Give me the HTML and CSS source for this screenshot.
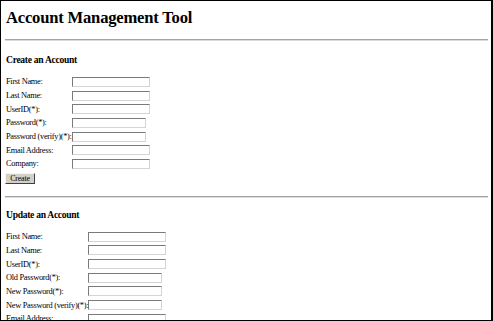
FILE: index.html
```html
<!DOCTYPE html>
<html lang="en">
<head>
    <meta charset="UTF-8">
    <title>Account Management Tool</title>
    <link rel="stylesheet" href="styles.css">
</head>
<body>
    <div class="frame">
        <h1 class="page-title">Account Management Tool</h1>
        <hr class="divider">

        <!-- Create form -->
        <h3 class="section-title">Create an Account</h3>
        <table class="form-table create-table">
            <tr><td class="label">First Name:</td><td><input class="field" type="text"></td></tr>
            <tr><td class="label">Last Name:</td><td><input class="field" type="text"></td></tr>
            <tr><td class="label">UserID(*):</td><td><input class="field" type="text"></td></tr>
            <tr><td class="label">Password(*):</td><td><input class="field field-pass" type="password"></td></tr>
            <tr><td class="label">Password (verify)(*):</td><td><input class="field field-pass" type="password"></td></tr>
            <tr><td class="label">Email Address:</td><td><input class="field" type="text"></td></tr>
            <tr><td class="label">Company:</td><td><input class="field" type="text"></td></tr>
        </table>
        <button class="btn" type="button">Create</button>

        <hr class="divider divider-second">

        <!-- Update form -->
        <h3 class="section-title update-title">Update an Account</h3>
        <table class="form-table update-table">
            <tr><td class="label">First Name:</td><td><input class="field" type="text"></td></tr>
            <tr><td class="label">Last Name:</td><td><input class="field" type="text"></td></tr>
            <tr><td class="label">UserID(*):</td><td><input class="field" type="text"></td></tr>
            <tr><td class="label">Old Password(*):</td><td><input class="field field-pass" type="password"></td></tr>
            <tr><td class="label">New Password(*):</td><td><input class="field field-pass" type="password"></td></tr>
            <tr><td class="label">New Password (verify)(*):</td><td><input class="field field-pass" type="password"></td></tr>
            <tr><td class="label">Email Address:</td><td><input class="field" type="text"></td></tr>
            <tr><td class="label">Company:</td><td><input class="field" type="text"></td></tr>
        </table>
    </div>
</body>
</html>
```

FILE: styles.css
```css
html, body {
    margin: 0;
    padding: 0;
}

.frame {
    box-sizing: border-box;
    width: 493px;
    height: 321px;
    border: 1px solid #000;
    border-right-width: 2px;
    overflow: hidden;
    padding: 0 3px 0 4px;
    font-family: "Liberation Serif", "Times New Roman", serif;
    color: #000;
    background: #fff;
}

.page-title {
    font-size: 16.6px;
    line-height: 20px;
    font-weight: bold;
    letter-spacing: -0.2px;
    margin: 7px 0 0 1px;
}

.divider {
    height: 0;
    margin: 11px 0 0 0;
    border: 0;
    border-top: 1px solid #a4a4a4;
    border-bottom: 1px solid #dadada;
}

.divider-second {
    margin-top: 12px;
}

.section-title {
    font-size: 9.6px;
    line-height: 12px;
    font-weight: bold;
    letter-spacing: -0.3px;
    margin: 12.5px 0 0 1px;
}

.update-title {
    margin-top: 11.5px;
}

.form-table {
    border-collapse: collapse;
    margin: 9.5px 0 0 1px;
    font-size: 8.4px;
    letter-spacing: -0.3px;
}

.update-table {
    margin-top: 8.5px;
}

.form-table td {
    padding: 0;
    height: 13.7px;
    vertical-align: middle;
    white-space: nowrap;
}

.field {
    display: block;
    box-sizing: border-box;
    width: 78px;
    height: 10px;
    margin: 0;
    padding: 0;
    border: 1px solid;
    border-color: #7a7a7a #d4d4d4 #d4d4d4 #7a7a7a;
    background: #fff;
}

.field-pass {
    width: 74px;
}

.btn {
    display: block;
    box-sizing: border-box;
    width: 30px;
    height: 11px;
    margin: 2px 0 0 0;
    padding: 0;
    font-family: "Liberation Serif", "Times New Roman", serif;
    font-size: 8px;
    line-height: 9px;
    letter-spacing: -0.2px;
    color: #000;
    background: #d4d0c8;
    border: 1px solid;
    border-color: #f4f4f4 #404040 #404040 #f4f4f4;
}
```
